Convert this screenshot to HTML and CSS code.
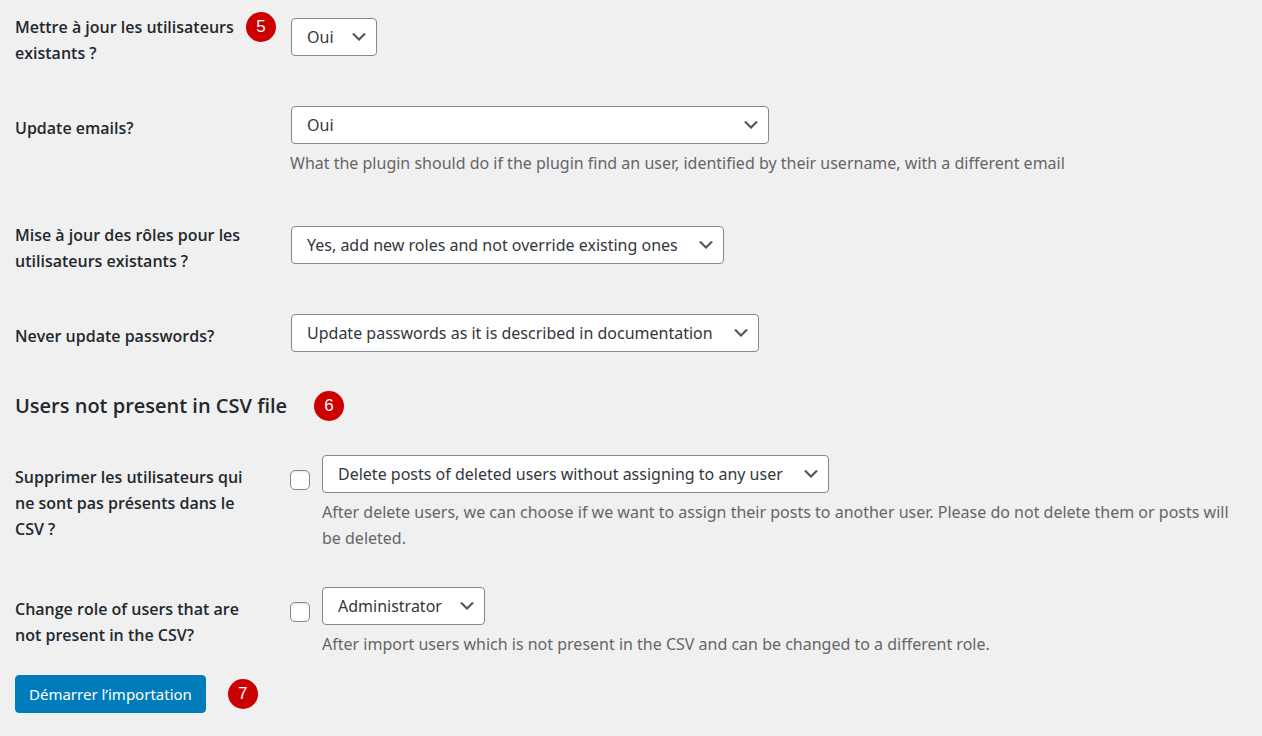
FILE: index.html
```
<!DOCTYPE html>
<html lang="fr">
<head>
    <meta charset="UTF-8">
    <meta name="viewport" content="width=device-width, initial-scale=1.0">
    <title>Importation des utilisateurs</title>
    <link rel="stylesheet" href="styles.css">
</head>
<body>
    <form class="import-form">
        <div class="form-table">
            <div class="row centered">
                <div class="row-label">
                    <label for="update-existing">Mettre à jour les utilisateurs existants ?</label>
                    <span class="badge">5</span>
                </div>
                <div class="field">
                    <select id="update-existing" class="short">
                        <option>Oui</option>
                    </select>
                </div>
            </div>
            <div class="row">
                <div class="row-label">
                    <label for="update-emails">Update emails?</label>
                </div>
                <div class="field">
                    <select id="update-emails" class="wide">
                        <option>Oui</option>
                    </select>
                    <p class="description">What the plugin should do if the plugin find an user, identified by their username, with a different email</p>
                </div>
            </div>
            <div class="row centered">
                <div class="row-label">
                    <label for="update-roles">Mise à jour des rôles pour les utilisateurs existants ?</label>
                </div>
                <div class="field">
                    <select id="update-roles">
                        <option>Yes, add new roles and not override existing ones</option>
                    </select>
                </div>
            </div>
            <div class="row">
                <div class="row-label">
                    <label for="update-passwords">Never update passwords?</label>
                </div>
                <div class="field">
                    <select id="update-passwords">
                        <option>Update passwords as it is described in documentation</option>
                    </select>
                </div>
            </div>
        </div>

        <div class="section-title">
            <h2>Users not present in CSV file</h2>
            <span class="badge">6</span>
        </div>

        <div class="form-table compact">
            <div class="row">
                <div class="row-label">
                    <label for="delete-users">Supprimer les utilisateurs qui ne sont pas présents dans le CSV ?</label>
                </div>
                <div class="field with-check">
                    <input type="checkbox" id="delete-users">
                    <div>
                        <select aria-label="Delete posts">
                            <option>Delete posts of deleted users without assigning to any user</option>
                        </select>
                        <p class="description">After delete users, we can choose if we want to assign their posts to another user. Please do not delete them or posts will be deleted.</p>
                    </div>
                </div>
            </div>
            <div class="row">
                <div class="row-label">
                    <label for="change-role">Change role of users that are not present in the CSV?</label>
                </div>
                <div class="field with-check">
                    <input type="checkbox" id="change-role">
                    <div>
                        <select aria-label="Role" class="short">
                            <option>Administrator</option>
                        </select>
                        <p class="description">After import users which is not present in the CSV and can be changed to a different role.</p>
                    </div>
                </div>
            </div>
        </div>

        <div class="submit">
            <button type="submit">Démarrer l’importation</button>
            <span class="badge">7</span>
        </div>
    </form>
</body>
</html>
```

FILE: styles.css
```
* {
    box-sizing: border-box;
}

body {
    margin: 0;
    background-color: #f0f0f1;
    color: #23282d;
    font-family: 'Noto Sans', 'Open Sans', sans-serif;
    font-size: 16px;
    line-height: 26px;
}

.import-form {
    padding: 14px 8px 24px 15px;
}

.form-table {
    display: flex;
    flex-direction: column;
    gap: 40px;
}

.form-table.compact {
    gap: 30px;
}

.row {
    display: grid;
    grid-template-columns: 232px 1fr;
    column-gap: 43px;
    align-items: start;
}

.row-label {
    display: flex;
    align-items: flex-start;
    padding-top: 9px;
    font-family: 'Open Sans', sans-serif;
    font-weight: 600;
}

.row-label label {
    flex: 0 0 231px;
}

.centered {
    align-items: center;
}

.centered .row-label {
    padding-top: 0;
}

.centered .field {
    padding-bottom: 6px;
}

.badge {
    flex: none;
    width: 30px;
    height: 30px;
    margin: -2px 0;
    border-radius: 50%;
    background-color: #cc0000;
    color: #fff;
    font-family: 'Liberation Sans', Arial, sans-serif;
    font-size: 17px;
    font-weight: normal;
    line-height: 30px;
    text-align: center;
}

select {
    display: block;
    appearance: none;
    height: 38px;
    margin: 0;
    padding: 0 45px 0 15px;
    border: 1px solid #7e8993;
    border-radius: 4px;
    background: #fff url("data:image/svg+xml,%3Csvg xmlns='http://www.w3.org/2000/svg' width='20' height='20'%3E%3Cpath d='M5 6l5 5 5-5 2 1-7 7-7-7 2-1z' fill='%23555'/%3E%3C/svg%3E") no-repeat right 7px center;
    color: #32373c;
    font: inherit;
}

select.short {
    padding-right: 42px;
}

select.wide {
    width: 478px;
    max-width: 100%;
}

.field > select {
    margin-left: 1px;
}

.description {
    margin: 6px 0;
    padding-right: 8px;
    color: #666;
}

.with-check {
    display: flex;
    align-items: flex-start;
    gap: 12px;
}

input[type="checkbox"] {
    appearance: none;
    flex: none;
    width: 20px;
    height: 20px;
    margin: 15px 0 0;
    border: 1px solid #7e8993;
    border-radius: 5px;
    background-color: #fff;
    box-shadow: inset 0 1px 2px rgba(0, 0, 0, 0.1);
}

.section-title {
    display: flex;
    align-items: center;
    gap: 27px;
    margin: 41px 0 36px;
}

h2 {
    margin: 0;
    font-family: 'Open Sans', sans-serif;
    font-size: 20px;
    font-weight: 600;
    line-height: 26px;
}

.submit {
    display: flex;
    align-items: center;
    gap: 22px;
    margin-top: 12px;
}

button {
    height: 38px;
    padding: 0 13px;
    border: 1px solid #007cba;
    border-radius: 4px;
    background-color: #007cba;
    color: #fff;
    font: inherit;
    font-size: 15px;
}
```
